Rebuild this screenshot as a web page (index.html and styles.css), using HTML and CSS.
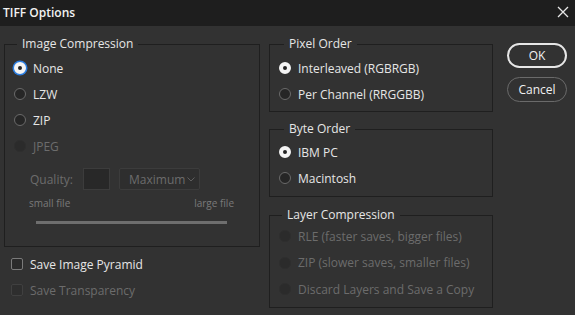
FILE: index.html
```html
<!DOCTYPE html>
<html lang="en">
<head>
    <meta charset="UTF-8">
    <title>TIFF Options</title>
    <link rel="stylesheet" href="styles.css">
</head>
<body>
    <div class="dialog">
        <div class="titlebar">
            <span class="title">TIFF Options</span>
            <svg class="close" width="12" height="12" viewBox="0 0 12 12">
                <path d="M1 1L11 11M11 1L1 11" stroke="#e8e8e8" stroke-width="1.3"/>
            </svg>
        </div>
        <div class="content">
            <div class="col-left">
                <fieldset class="group group-image">
                    <legend>Image Compression</legend>
                    <div class="option"><span class="radio checked focus"></span>None</div>
                    <div class="option"><span class="radio"></span>LZW</div>
                    <div class="option"><span class="radio"></span>ZIP</div>
                    <div class="option disabled"><span class="radio"></span>JPEG</div>
                    <div class="quality">
                        <span class="q-label">Quality:</span>
                        <span class="q-input"></span>
                        <span class="q-select">Maximum
                            <svg width="8" height="5" viewBox="0 0 8 5"><path d="M0.5 0.5L4 4L7.5 0.5" fill="none" stroke="#5e5e5e"/></svg>
                        </span>
                    </div>
                    <div class="size-labels">
                        <span>small file</span>
                        <span>large file</span>
                    </div>
                    <div class="slider"></div>
                </fieldset>
                <div class="checks">
                    <div class="option check-row"><span class="checkbox"></span>Save Image Pyramid</div>
                    <div class="option check-row disabled"><span class="checkbox"></span>Save Transparency</div>
                </div>
            </div>
            <div class="col-right">
                <fieldset class="group group-pixel">
                    <legend>Pixel Order</legend>
                    <div class="option"><span class="radio checked"></span>Interleaved (RGBRGB)</div>
                    <div class="option"><span class="radio"></span>Per Channel (RRGGBB)</div>
                </fieldset>
                <fieldset class="group group-byte">
                    <legend>Byte Order</legend>
                    <div class="option"><span class="radio checked"></span>IBM PC</div>
                    <div class="option"><span class="radio"></span>Macintosh</div>
                </fieldset>
                <fieldset class="group group-layer">
                    <legend>Layer Compression</legend>
                    <div class="option disabled"><span class="radio"></span>RLE (faster saves, bigger files)</div>
                    <div class="option disabled"><span class="radio"></span>ZIP (slower saves, smaller files)</div>
                    <div class="option disabled"><span class="radio"></span>Discard Layers and Save a Copy</div>
                </fieldset>
            </div>
            <div class="col-buttons">
                <button class="btn btn-primary">OK</button>
                <button class="btn">Cancel</button>
            </div>
        </div>
    </div>
</body>
</html>
```
FILE: styles.css
```css
* {
    margin: 0;
    padding: 0;
    box-sizing: border-box;
}

body {
    width: 575px;
    height: 315px;
    background-color: #323232;
    font-family: "Open Sans", "Noto Sans", sans-serif;
    font-size: 12px;
    color: #e6e6e6;
    overflow: hidden;
}

.titlebar {
    display: flex;
    align-items: center;
    justify-content: space-between;
    height: 26px;
    padding: 0 6px 2px 3px;
    background-color: #1e1e1e;
}

.title {
    font-weight: 600;
    font-size: 12px;
    color: #f2f2f2;
}

.close {
    display: block;
}

.content {
    display: flex;
    padding: 10px 0 0 4px;
}

.col-left {
    width: 256px;
}

.col-right {
    width: 224px;
    margin-left: 9px;
    display: flex;
    flex-direction: column;
}

.col-buttons {
    display: flex;
    flex-direction: column;
    gap: 9px;
    margin-left: 14px;
    margin-top: 7px;
}

.group {
    border: 1px solid #1f1f1f;
    padding: 3px 0 4px 9px;
}

.group legend {
    margin-left: 5px;
    padding: 0 5px;
    line-height: 16px;
    color: #e6e6e6;
}

.group-image {
    height: 211px;
}

.group-image legend {
    margin-left: 3px;
}

.group-byte {
    margin-top: 9px;
    padding: 2px 0 5px 9px;
}

.group-layer {
    margin-top: 10px;
    padding: 0 0 4px 9px;
}

.group-layer legend {
    margin-left: 3px;
}

.group-layer .option {
    height: 26.5px;
}

.option {
    display: flex;
    align-items: center;
    height: 26px;
    color: #e6e6e6;
}

.option.disabled {
    color: #6c6c6c;
}

.radio {
    width: 12px;
    height: 12px;
    border-radius: 50%;
    border: 1px solid #6a6a6a;
    background-color: #262626;
    margin-right: 7px;
    flex-shrink: 0;
}

.radio.checked {
    border: 4px solid #f4f4f4;
    background-color: #222;
}

.radio.focus {
    box-shadow: 0 0 0 1.5px #2b7de0;
}

.option.disabled .radio {
    border-color: #2e2e2e;
    background-color: #2b2b2b;
}

.quality {
    display: flex;
    align-items: center;
    height: 22px;
    margin-top: 9px;
    padding-left: 16px;
    color: #6c6c6c;
}

.q-label {
    width: 53px;
}

.q-input {
    width: 27px;
    height: 22px;
    border: 1px solid #3c3c3c;
    background-color: #282828;
}

.q-select {
    display: flex;
    align-items: center;
    justify-content: space-between;
    width: 81px;
    height: 22px;
    margin-left: 9px;
    padding: 0 4px 0 9px;
    border: 1px solid #3c3c3c;
    border-radius: 2px;
    background-color: #2e2e2e;
}

.size-labels {
    display: flex;
    justify-content: space-between;
    width: 220px;
    height: 14px;
    line-height: 14px;
    margin-top: 6px;
    padding-left: 15px;
    font-size: 10px;
    color: #7a7a7a;
}

.slider {
    width: 191px;
    height: 3px;
    margin: 11px 0 0 22px;
    background-color: #6e6e6e;
}

.checks {
    margin-top: 4px;
}

.check-row {
    padding-left: 7px;
}

.checkbox {
    width: 12px;
    height: 12px;
    border: 1px solid #7a7a7a;
    border-radius: 2px;
    background-color: #2a2a2a;
    margin-right: 7px;
}

.disabled .checkbox {
    border-color: #404040;
    background-color: #2e2e2e;
}

.btn {
    width: 60px;
    height: 25px;
    border-radius: 13px;
    border: 1px solid #6a6a6a;
    background: transparent;
    color: #f0f0f0;
    font-family: "Open Sans", "Noto Sans", sans-serif;
    font-size: 12px;
}

.btn-primary {
    border: 2px solid #e6e6e6;
}
```
